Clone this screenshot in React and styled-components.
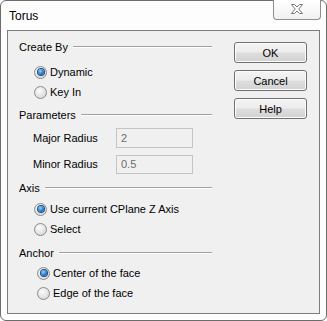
import React from "react";
import styled, { createGlobalStyle } from "styled-components";

const Global = createGlobalStyle`
  html, body { margin: 0; padding: 0; background: #fff; }
  body { font-family: "Liberation Sans", Arial, sans-serif; font-size: 11px; color: #000; }
  * { box-sizing: border-box; }
`;

const Window = styled.div`
  width: 327px;
  height: 321px;
  border: 1px solid #6c6c6c;
  border-radius: 6px;
  background: #fdfdfd;
  padding: 0 6px 6px 6px;
  display: flex;
  flex-direction: column;
`;

const TitleBar = styled.div`
  height: 29px;
  display: flex;
  justify-content: space-between;
  align-items: flex-start;
`;

const Title = styled.div`
  font-size: 12px;
  padding: 8px 0 0 2px;
  color: #000;
`;

const CloseButton = styled.div`
  width: 48px;
  height: 20px;
  margin-top: -1px;
  margin-right: -1px;
  border: 1px solid #8e8e8e;
  border-top: none;
  border-radius: 0 0 4px 4px;
  background: linear-gradient(#ffffff, #f1f1f1);
  display: flex;
  align-items: center;
  justify-content: center;
  padding-bottom: 1px;
`;

const Client = styled.div`
  flex: 1;
  border: 1px solid #7d7d7d;
  background: #f0f0f0;
  display: flex;
  padding: 6px 12px 0 11px;
`;

const LeftColumn = styled.div`
  width: 193px;
  display: flex;
  flex-direction: column;
`;

const Section = styled.div`
  margin-top: ${(p) => p.$gap ?? 0}px;
`;

const Header = styled.div`
  height: 20px;
  display: flex;
  align-items: center;
  gap: 5px;
  &::after {
    content: "";
    flex: 1;
    border-top: 1px solid #a0a0a0;
    border-bottom: 1px solid #ffffff;
  }
`;

const Body = styled.div`
  padding-top: ${(p) => p.$pad ?? 0}px;
  padding-left: ${(p) => p.$indent ?? 15}px;
  display: flex;
  flex-direction: column;
  gap: ${(p) => p.$rowGap ?? 0}px;
`;

const RadioRow = styled.div`
  height: 20px;
  display: flex;
  align-items: center;
  gap: 3px;
`;

const RadioCircle = styled.span`
  width: 13px;
  height: 13px;
  border-radius: 50%;
  border: 1px solid #8a8a8a;
  background: radial-gradient(circle at 40% 35%, #fdfdfd, #dcdcdc 70%, #cbcbcb);
  display: flex;
  align-items: center;
  justify-content: center;
  &::after {
    content: "";
    display: ${(p) => (p.$checked ? "block" : "none")};
    width: 6px;
    height: 6px;
    border-radius: 50%;
    background: radial-gradient(circle at 40% 35%, #8fd3ff, #2a78c8 55%, #0e4a8e);
    box-shadow: 0 0 0 1px #1b4f87;
  }
`;

const FieldRow = styled.div`
  height: 20px;
  display: flex;
  align-items: center;
  padding-left: 14px;
`;

const FieldLabel = styled.span`
  width: 83px;
`;

const Input = styled.div`
  width: 77px;
  height: ${(p) => p.$h ?? 20}px;
  border: 1px solid #c4c4c4;
  background: #f0f0f0;
  color: #6d6d6d;
  display: flex;
  align-items: center;
  padding-left: 4px;
`;

const ButtonColumn = styled.div`
  margin-left: 22px;
  padding-top: 5px;
  display: flex;
  flex-direction: column;
  gap: 7px;
`;

const Button = styled.div`
  width: 73px;
  height: 21px;
  border: 1px solid #707070;
  border-radius: 3px;
  background: linear-gradient(#f4f4f4 0%, #ececec 48%, #dedede 52%, #d2d2d2 100%);
  box-shadow: inset 0 0 0 1px #fcfcfc;
  display: flex;
  align-items: center;
  justify-content: center;
`;

function Radio({ label, checked }) {
  return (
    <RadioRow>
      <RadioCircle $checked={checked} />
      <span>{label}</span>
    </RadioRow>
  );
}

function CloseGlyph() {
  return (
    <svg width="12" height="10" viewBox="0 0 12 10">
      <polygon
        points="0.5,0.5 3.5,0.5 6,3 8.5,0.5 11.5,0.5 7.8,5 11.5,9.5 8.5,9.5 6,7 3.5,9.5 0.5,9.5 4.2,5"
        fill="#ffffff"
        stroke="#777777"
        strokeWidth="1"
        strokeLinejoin="round"
      />
    </svg>
  );
}

export default function App() {
  return (
    <>
      <Global />
      <Window>
        <TitleBar>
          <Title>Torus</Title>
          <CloseButton>
            <CloseGlyph />
          </CloseButton>
        </TitleBar>
        <Client>
          <LeftColumn>
            <Section>
              <Header>Create By</Header>
              <Body $pad={5}>
                <Radio label="Dynamic" checked />
                <Radio label="Key In" />
              </Body>
            </Section>
            <Section $gap={3}>
              <Header>Parameters</Header>
              <Body $pad={3} $indent={0} $rowGap={6}>
                <FieldRow>
                  <FieldLabel>Major Radius</FieldLabel>
                  <Input>2</Input>
                </FieldRow>
                <FieldRow>
                  <FieldLabel>Minor Radius</FieldLabel>
                  <Input $h={19}>0.5</Input>
                </FieldRow>
              </Body>
            </Section>
            <Section $gap={4}>
              <Header>Axis</Header>
              <Body $pad={1}>
                <Radio label="Use current CPlane Z Axis" checked />
                <Radio label="Select" />
              </Body>
            </Section>
            <Section $gap={4}>
              <Header>Anchor</Header>
              <Body $indent={18}>
                <Radio label="Center of the face" checked />
                <Radio label="Edge of the face" />
              </Body>
            </Section>
          </LeftColumn>
          <ButtonColumn>
            <Button>OK</Button>
            <Button>Cancel</Button>
            <Button>Help</Button>
          </ButtonColumn>
        </Client>
      </Window>
    </>
  );
}
